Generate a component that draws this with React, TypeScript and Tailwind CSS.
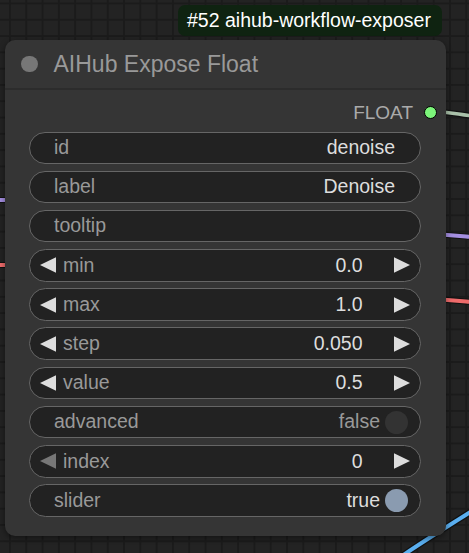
import React from "react";

type Row =
  | { kind: "text"; label: string; value: string }
  | { kind: "number"; label: string; value: string; leftDim?: boolean }
  | { kind: "toggle"; label: string; on: boolean };

const rows: Row[] = [
  { kind: "text", label: "id", value: "denoise" },
  { kind: "text", label: "label", value: "Denoise" },
  { kind: "text", label: "tooltip", value: "" },
  { kind: "number", label: "min", value: "0.0" },
  { kind: "number", label: "max", value: "1.0" },
  { kind: "number", label: "step", value: "0.050" },
  { kind: "number", label: "value", value: "0.5" },
  { kind: "toggle", label: "advanced", on: false },
  { kind: "number", label: "index", value: "0", leftDim: true },
  { kind: "toggle", label: "slider", on: true },
];

function Arrow({ dir, dim }: { dir: "left" | "right"; dim?: boolean }) {
  return (
    <svg width="16" height="16" viewBox="0 0 16 16" className="shrink-0">
      <polygon
        points={dir === "left" ? "0,8 16,0.2 16,15.8" : "16,8 0,0.2 0,15.8"}
        fill={dim ? "#777" : "#ddd"}
      />
    </svg>
  );
}

function Widget({ row }: { row: Row }) {
  const base =
    "flex h-[32.5px] items-center rounded-full border border-[#666] bg-[#222] text-[19.5px] leading-none";
  if (row.kind === "number") {
    return (
      <div className={`${base} pl-[10px] pr-[10px]`}>
        <Arrow dir="left" dim={row.leftDim} />
        <span className="ml-[7px] flex-1 text-[#999]">{row.label}</span>
        <span className="mr-[31.5px] text-[#ddd]">{row.value}</span>
        <Arrow dir="right" />
      </div>
    );
  }
  if (row.kind === "toggle") {
    return (
      <div className={`${base} pl-[24px] pr-[12px]`}>
        <span className="flex-1 text-[#999]">{row.label}</span>
        <span className={row.on ? "text-[#ddd]" : "text-[#999]"}>{row.on ? "true" : "false"}</span>
        <span
          className={`ml-[5px] h-[23px] w-[23px] rounded-full ${row.on ? "bg-[#8a9bb0]" : "bg-[#333]"}`}
        />
      </div>
    );
  }
  return (
    <div className={`${base} pl-[24px] pr-[25px]`}>
      <span className="flex-1 text-[#999]">{row.label}</span>
      <span className="text-[#ddd]">{row.value}</span>
    </div>
  );
}

export default function App() {
  return (
    <div
      className="relative h-[553px] w-[469px] overflow-hidden bg-[#232323] bg-[linear-gradient(to_right,#1b1b1b_2px,transparent_2px),linear-gradient(to_bottom,#1b1b1b_2px,transparent_2px)] bg-[size:16.3px_16.3px] bg-[position:9px_2.5px]"
      style={{ fontFamily: '"Liberation Sans", Arial, sans-serif' }}
    >
      {/* wires behind the node */}
      <svg className="absolute inset-0" width="469" height="553">
        <g fill="none" strokeLinecap="round">
          <path d="M437 112 C450 112 456 114 472 116" stroke="#111" strokeWidth="6" />
          <path d="M437 112 C450 112 456 114 472 116" stroke="#a9c0a9" strokeWidth="3.5" />
          <path d="M-4 200 L20 200" stroke="#111" strokeWidth="6" />
          <path d="M-4 200 L20 200" stroke="#a48ee0" strokeWidth="4" />
          <path d="M-4 265 L20 265" stroke="#111" strokeWidth="6" />
          <path d="M-4 265 L20 265" stroke="#ef6b6b" strokeWidth="4" />
          <path d="M430 234 C450 235 460 236 472 237" stroke="#111" strokeWidth="6" />
          <path d="M430 234 C450 235 460 236 472 237" stroke="#a48ee0" strokeWidth="4" />
          <path d="M430 299 C450 300 460 301 472 302" stroke="#111" strokeWidth="6" />
          <path d="M430 299 C450 300 460 301 472 302" stroke="#ef6b6b" strokeWidth="4" />
          <path d="M402 556 C425 540 450 525 472 511" stroke="#111" strokeWidth="6.5" />
          <path d="M402 556 C425 540 450 525 472 511" stroke="#5aaff0" strokeWidth="4" />
        </g>
      </svg>

      {/* node id badge */}
      <div className="absolute left-[178px] top-[5px] flex h-[31px] w-[264px] items-center rounded-[7px] bg-[#0f2311] pl-[9px] text-[19.5px] leading-none text-white">
        #52 aihub-workflow-exposer
      </div>

      {/* node */}
      <div className="absolute left-[5px] top-[40px] w-[441px] rounded-[10px] bg-[#353535] shadow-[0_2px_6px_rgba(0,0,0,0.45)]">
        <div className="flex h-[50px] items-center border-b-2 border-[#2c2c2c] pl-[16px]">
          <span className="h-[16.5px] w-[16.5px] rounded-full bg-[#777]" />
          <span className="ml-[16px] text-[23px] leading-none text-[#999]">AIHub Expose Float</span>
        </div>
        <div className="pb-[19px] pt-[9px]">
          <div className="flex h-[26px] items-center justify-end gap-[11px] pr-[9px]">
            <span className="text-[19px] leading-none text-[#aaa]">FLOAT</span>
            <span className="h-[13px] w-[13px] rounded-full border-[1.5px] border-black bg-[#7cf57a]" />
          </div>
          <div className="mt-[6.5px] flex flex-col gap-[6.7px] pl-[24px] pr-[25px]">
            {rows.map((r) => (
              <Widget key={r.label} row={r} />
            ))}
          </div>
        </div>
      </div>
    </div>
  );
}
